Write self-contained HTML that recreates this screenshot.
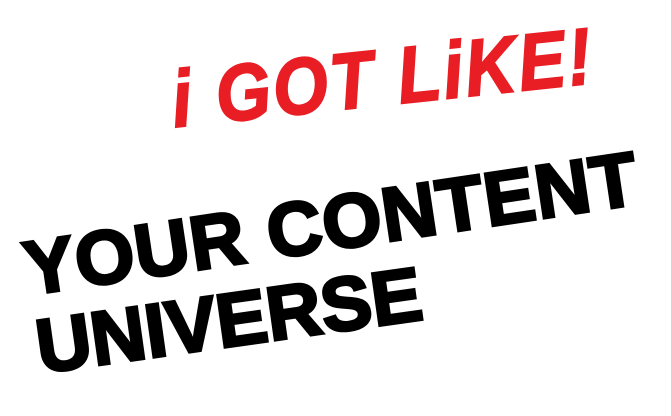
<!DOCTYPE html>
<html><head><style>
html,body{margin:0;padding:0;width:671px;height:416px;background:#fff;overflow:hidden;position:relative}
.t{position:absolute;white-space:nowrap;font-family:"Liberation Sans",sans-serif;font-weight:bold;transform-origin:0 100%;line-height:1}
</style></head><body>
<div class="t" style="left:176px;top:60px;font-size:80px;color:#e91e25;font-style:italic;transform:rotate(-6deg) scaleX(0.88);letter-spacing:3px;-webkit-text-stroke:2px #e91e25">i GOT LiKE!</div>
<div class="t" style="left:30px;top:232px;font-size:76px;color:#000;transform:rotate(-8.5deg);letter-spacing:1px;-webkit-text-stroke:3px #000">YOUR CONTENT</div>
<div class="t" style="left:42px;top:310px;font-size:76px;color:#000;transform:rotate(-8deg);letter-spacing:0px;-webkit-text-stroke:3px #000">UNIVERSE</div>
</body></html>
